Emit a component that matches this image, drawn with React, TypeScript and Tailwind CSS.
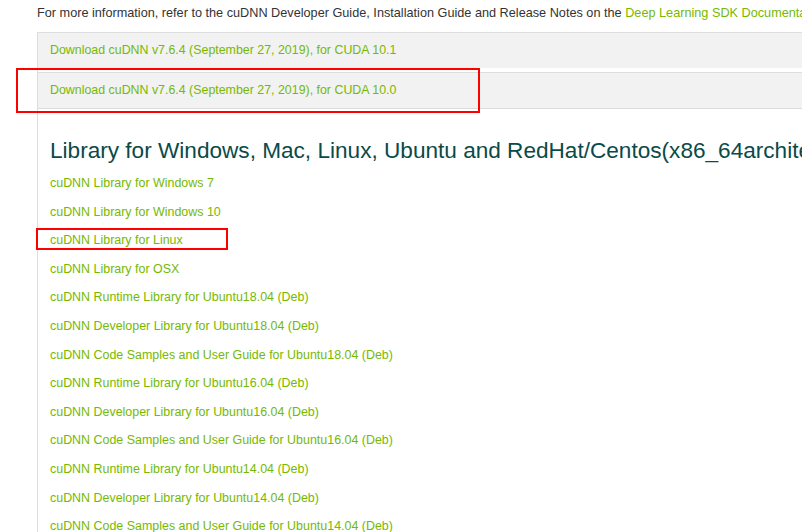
const links = [
  'cuDNN Library for Windows 7',
  'cuDNN Library for Windows 10',
  'cuDNN Library for Linux',
  'cuDNN Library for OSX',
  'cuDNN Runtime Library for Ubuntu18.04 (Deb)',
  'cuDNN Developer Library for Ubuntu18.04 (Deb)',
  'cuDNN Code Samples and User Guide for Ubuntu18.04 (Deb)',
  'cuDNN Runtime Library for Ubuntu16.04 (Deb)',
  'cuDNN Developer Library for Ubuntu16.04 (Deb)',
  'cuDNN Code Samples and User Guide for Ubuntu16.04 (Deb)',
  'cuDNN Runtime Library for Ubuntu14.04 (Deb)',
  'cuDNN Developer Library for Ubuntu14.04 (Deb)',
  'cuDNN Code Samples and User Guide for Ubuntu14.04 (Deb)',
];

export default function App() {
  return (
    <div
      className="relative w-[802px] h-[532px] overflow-hidden bg-white"
      style={{ fontFamily: '"Liberation Sans", Arial, sans-serif' }}
    >
      <div className="pl-[37px]">
        <p className="h-[32px] pt-[4px] text-[12.7px] leading-[18px] text-[#333] whitespace-nowrap">
          For more information, refer to the cuDNN Developer Guide, Installation Guide and Release Notes on the{' '}
          <a className="text-[#76b900]">Deep Learning SDK Documentation</a>
        </p>

        <div className="h-[36px] flex items-center pl-[12px] border-t border-l border-[#dddddd] bg-[#f2f2f2] text-[12.4px] text-[#76b900] whitespace-nowrap">
          Download cuDNN v7.6.4 (September 27, 2019), for CUDA 10.1
        </div>
        <div className="h-[4px] border-l border-[#dddddd]" />
        <div className="h-[37px] flex items-center pl-[12px] border-t border-b border-l border-[#dddddd] bg-[#f2f2f2] text-[12.4px] text-[#76b900] whitespace-nowrap">
          Download cuDNN v7.6.4 (September 27, 2019), for CUDA 10.0
        </div>

        <div className="border-l border-[#dddddd] pl-[12px] pt-[28px] pb-[20px]">
          <h2 className="text-[22.6px] leading-[28px] text-[#0a4a4a] whitespace-nowrap">
            Library for Windows, Mac, Linux, Ubuntu and RedHat/Centos(x86_64architecture)
          </h2>
          <ul className="mt-[4px] flex flex-col">
            {links.map((l) => (
              <li key={l} className="h-[28.6px] leading-[28.6px] text-[12.45px] text-[#76b900] whitespace-nowrap">
                {l}
              </li>
            ))}
          </ul>
        </div>
      </div>

      {/* annotation boxes */}
      <div className="absolute left-[16px] top-[68px] w-[464px] h-[45px] border-[2px] border-[#ff0000]" />
      <div className="absolute left-[36px] top-[228px] w-[192px] h-[22px] border-[2px] border-[#ff0000]" />
    </div>
  );
}
